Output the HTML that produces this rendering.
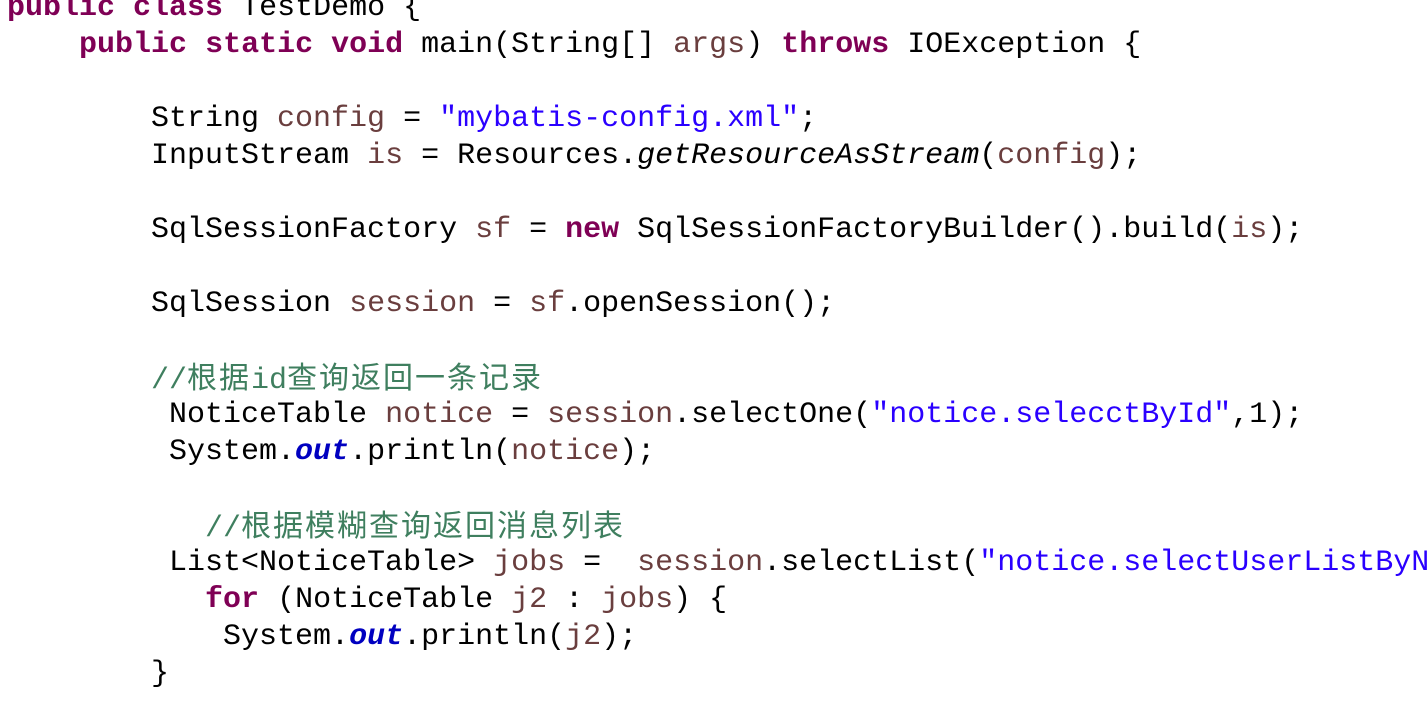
<!DOCTYPE html>
<html><head><meta charset="utf-8"><style>
html,body{margin:0;padding:0;background:#fff;width:1428px;height:718px;overflow:hidden}
.c{position:absolute;left:7px;top:-10px;width:1421px;overflow:hidden;font-family:"Liberation Mono","Noto Sans CJK SC",monospace;font-size:30px;color:#000}
.c div{height:37px;line-height:37px;white-space:pre;overflow:hidden}
.k{color:#7f0055;font-weight:bold}
.s{color:#2a00ff}
.v{color:#6a3e3e}
.m{color:#3f7f5f}
.f{color:#0000c0;font-weight:bold;font-style:italic}
.i{font-style:italic}
.cj{font-family:"Noto Sans CJK SC",sans-serif;font-size:30px;letter-spacing:2px;line-height:30px}
</style></head><body>
<div class="c">
<div><span class="k">public</span> <span class="k">class</span> TestDemo {</div>
<div>    <span class="k">public</span> <span class="k">static</span> <span class="k">void</span> main(String[] <span class="v">args</span>) <span class="k">throws</span> IOException {</div>
<div> </div>
<div>        String <span class="v">config</span> = <span class="s">"mybatis-config.xml"</span>;</div>
<div>        InputStream <span class="v">is</span> = Resources.<span class="i">getResourceAsStream</span>(<span class="v">config</span>);</div>
<div> </div>
<div>        SqlSessionFactory <span class="v">sf</span> = <span class="k">new</span> SqlSessionFactoryBuilder().build(<span class="v">is</span>);</div>
<div> </div>
<div>        SqlSession <span class="v">session</span> = <span class="v">sf</span>.openSession();</div>
<div> </div>
<div>        <span class="m">//<span class="cj">根据</span>id<span class="cj">查询返回一条记录</span></span></div>
<div>         NoticeTable <span class="v">notice</span> = <span class="v">session</span>.selectOne(<span class="s">"notice.selecctById"</span>,1);</div>
<div>         System.<span class="f">out</span>.println(<span class="v">notice</span>);</div>
<div> </div>
<div>           <span class="m">//<span class="cj">根据模糊查询返回消息列表</span></span></div>
<div>         List&lt;NoticeTable&gt; <span class="v">jobs</span> =  <span class="v">session</span>.selectList(<span class="s">"notice.selectUserListByN</span></div>
<div>           <span class="k">for</span> (NoticeTable <span class="v">j2</span> : <span class="v">jobs</span>) {</div>
<div>            System.<span class="f">out</span>.println(<span class="v">j2</span>);</div>
<div>        }</div>
</div>
</body></html>
